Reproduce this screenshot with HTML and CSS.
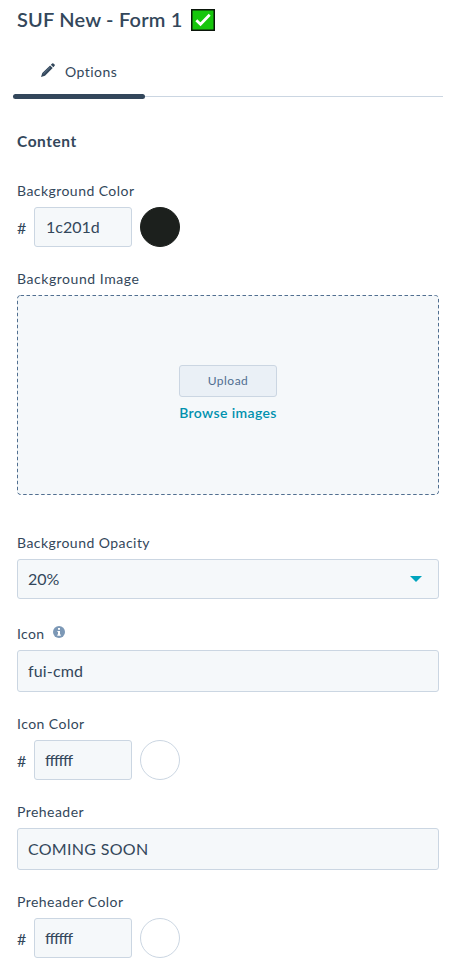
FILE: index.html
```html
<!DOCTYPE html>
<html lang="en">
<head>
<meta charset="utf-8">
<title>SUF New - Form 1</title>
<link rel="stylesheet" href="styles.css">
</head>
<body>
<header class="header">
  <h1 class="title">SUF New - Form 1</h1>
  <svg class="check" viewBox="0 0 24 22"><rect x=".75" y=".75" width="22.5" height="20.5" fill="#16c60c" stroke="#0b160b" stroke-width="1.5"/><path d="M5.3 11.2l4.2 4.1 9.2-9.6" fill="none" stroke="#fff" stroke-width="2.7"/></svg>
</header>
<nav class="tabs">
  <a class="tab">
    <svg class="pencil" viewBox="0 0 14 14"><path d="M0 14l1.3-4.1 7.8-7.5 2.6 2.7-7.7 7.6zM9.8 1.8L11.2.4q.6-.5 1.2 0l1.2 1.2q.5.6 0 1.2L12.4 4.3z" fill="#33475b"/><path d="M2.4 10.9l6.7-6.5" stroke="#7d95ad" stroke-width=".6"/></svg>
    <span class="tab-text">Options</span>
  </a>
</nav>
<main class="content">
  <h2 class="section">Content</h2>
  <div class="field">
    <div class="label">Background Color</div>
    <div class="color-row"><span class="hash">#</span><div class="input hex digits">1c201d</div><span class="swatch dark"></span></div>
  </div>
  <div class="field image-field">
    <div class="label image-label">Background Image</div>
    <div class="dropzone">
      <svg class="outline"><rect x=".5" y=".5" width="421" height="199" rx="3"/></svg>
      <button class="upload">Upload</button>
      <a class="browse">Browse images</a>
    </div>
  </div>
  <div class="field select-field">
    <div class="label">Background Opacity</div>
    <div class="input select"><span class="percent">20%</span><svg class="caret" viewBox="0 0 12 6"><path d="M0 0h12L6 6z" fill="#00a4bd"/></svg></div>
  </div>
  <div class="field">
    <div class="label icon-label"><span>Icon</span><svg class="info" viewBox="0 0 12 12"><circle cx="6" cy="6" r="6" fill="#7c98b6"/><path d="M5 2h2v1.7H5zM4.4 4.9H7v3.5h.8v1.3H4.3V8.4H5V6.1h-.6z" fill="#fff"/></svg></div>
    <div class="input tall cmd">fui-cmd</div>
  </div>
  <div class="field">
    <div class="label">Icon Color</div>
    <div class="color-row"><span class="hash">#</span><div class="input hex effs">ffffff</div><span class="swatch"></span></div>
  </div>
  <div class="field">
    <div class="label">Preheader</div>
    <div class="input tall soon">COMING SOON</div>
  </div>
  <div class="field">
    <div class="label">Preheader Color</div>
    <div class="color-row"><span class="hash">#</span><div class="input hex effs">ffffff</div><span class="swatch"></span></div>
  </div>
</main>
</body>
</html>
```
FILE: styles.css
```css
* { box-sizing: border-box; }
body {
  margin: 0;
  background: #fff;
  color: #33475b;
  font-family: Lato, "Liberation Sans", sans-serif;
  font-size: 14px;
}
svg { display: block; flex: none; }
.header { display: flex; align-items: center; height: 40px; padding-left: 17px; }
.title { width: 174px; margin: 0; padding-bottom: 2px; font-size: 20px; line-height: 28px; font-weight: 600; letter-spacing: .2px; white-space: nowrap; }
.check { width: 24px; height: 22px; }
.tabs { height: 59px; margin: 0 14px 0 13px; background: linear-gradient(#cbd6e2, #cbd6e2) 0 56px / 100% 1px no-repeat; }
.tab { display: flex; width: 132px; height: 59px; padding: 22px 0 0 28px; position: relative; }
.tab::after { content: ""; position: absolute; left: 0; bottom: 0; width: 132px; height: 5px; border-radius: 3px; background: #33475b; }
.pencil { width: 14px; height: 14px; margin: 1px 10px 0 0; }
.tab-text { line-height: 20px; letter-spacing: .48px; }
.content { padding: 32px 18px 0 17px; }
.section { margin: 0 0 30px; font-size: 15.5px; line-height: 20px; font-weight: 700; letter-spacing: .55px; }
.field { margin-bottom: 22px; }
.image-field { margin-bottom: 38px; }
.select-field { margin-bottom: 25px; }
.label { height: 20px; margin-bottom: 6px; line-height: 20px; letter-spacing: .45px; white-space: nowrap; }
.image-label { letter-spacing: .55px; }
.icon-label { display: flex; letter-spacing: .35px; }
.info { width: 12px; height: 12px; margin: 2px 0 0 9px; }
.input {
  display: flex;
  align-items: center;
  height: 40px;
  padding: 0 10px 1px;
  border: 1px solid #cbd6e2;
  border-radius: 3px;
  background: #f5f8fa;
  font-size: 16px;
}
.tall { height: 42px; }
.color-row { display: flex; align-items: center; }
.hash { width: 17px; padding-top: 1px; font-size: 16px; }
.hex { width: 98px; }
.digits { padding-left: 11px; }
.effs { letter-spacing: -.7px; font-variant-ligatures: none; }
.effs { letter-spacing: -1.1px; }
.swatch { width: 40px; height: 40px; margin-left: 8px; border: 1px solid #cbd6e2; border-radius: 50%; }
.dark { border-color: #1c201d; background: #1c201d; }
.dropzone { position: relative; display: flex; flex-direction: column; align-items: center; height: 200px; padding-top: 70px; border-radius: 3px; background: #f5f8fa; }
.outline { position: absolute; left: 0; top: 0; width: 422px; height: 200px; fill: none; stroke: #516f90; stroke-dasharray: 3.5 2.5; }
.upload { width: 98px; height: 32px; padding: 0 0 2px; border: 1px solid #cbd6e2; border-radius: 3px; background: #eaf0f6; color: #506e91; font: 12px Lato, sans-serif; letter-spacing: .5px; }
.browse { margin-top: 6px; color: #0091ae; font-weight: 600; line-height: 20px; letter-spacing: .37px; }
.select { justify-content: space-between; }
.caret { width: 12px; height: 6px; margin: 0 6px 0 0; }
.cmd { letter-spacing: .15px; }
.soon { letter-spacing: .3px; }
```
